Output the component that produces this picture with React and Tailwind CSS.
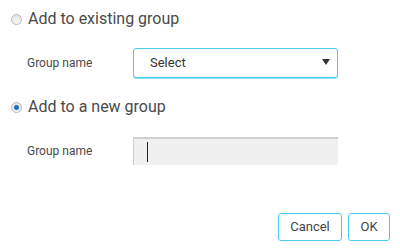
import React from 'react';

const Radio = ({ checked }) => (
  <span className="relative flex h-[11px] w-[11px] items-center justify-center rounded-full border border-[#b8b8b8] bg-gradient-to-b from-[#e4e4e4] to-[#f6f6f6]">
    {checked && <span className="h-[5px] w-[5px] rounded-full bg-[#1e6fb8]"></span>}
  </span>
);

export default function App() {
  return (
    <div className="h-[252px] w-[400px] bg-white font-['Roboto',sans-serif] text-[#444]">
      <div className="flex flex-col pt-[9px]">
        {/* existing group */}
        <label className="ml-[11px] flex h-5 items-center gap-[6px]">
          <Radio />
          <span className="text-[16px] text-[#4a4a4a]">Add to existing group</span>
        </label>

        <div className="mt-[19px] flex items-center pl-[27px]">
          <span className="w-[106px] text-[12px] text-[#4a4a4a]">Group name</span>
          <div className="flex h-[30px] w-[205px] items-center justify-between rounded-[3px] border border-[#45cde9] pl-[16px] pr-[7px] shadow-[0_1px_0_#8fe0f0]">
            <span className="text-[13px] text-[#333]">Select</span>
            <svg width="8" height="6" viewBox="0 0 8 6" className="-mt-[3px]">
              <path d="M0 0H8L4 6Z" fill="#333" />
            </svg>
          </div>
        </div>

        {/* new group */}
        <label className="ml-[11px] mt-[19px] flex h-5 items-center gap-[6px]">
          <Radio checked />
          <span className="text-[16px] text-[#4a4a4a]">Add to a new group</span>
        </label>

        <div className="mt-[20px] flex items-center pl-[27px]">
          <span className="w-[106px] text-[12px] text-[#4a4a4a]">Group name</span>
          <div className="flex h-[28px] w-[205px] items-center border-l border-t-2 border-[#cfcfcf] bg-[#f0f0f0] pl-[13px]">
            <span className="h-[20px] w-[1px] bg-[#222]"></span>
          </div>
        </div>

        {/* actions */}
        <div className="mt-[48px] flex justify-end gap-[6px] pr-[10px]">
          <button className="h-[28px] w-[64px] rounded-[3px] border border-[#45cde9] bg-white text-[13px] text-[#444]">
            Cancel
          </button>
          <button className="h-[28px] w-[42px] rounded-[3px] border border-[#45cde9] bg-white text-[13px] text-[#444]">
            OK
          </button>
        </div>
      </div>
    </div>
  );
}
